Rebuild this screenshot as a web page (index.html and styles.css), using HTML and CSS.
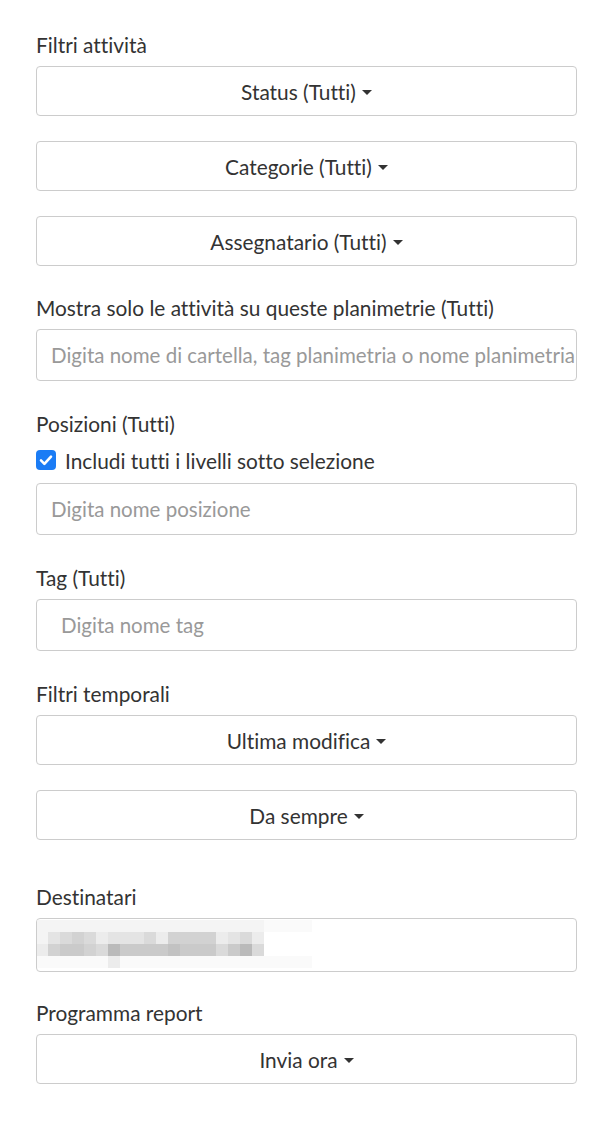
FILE: index.html
```html
<!DOCTYPE html>
<html lang="it">
<head>
<meta charset="utf-8">
<title>Filtri</title>
<link rel="stylesheet" href="styles.css">
</head>
<body>
<div class="page">
  <section class="group">
    <div class="label">Filtri attività</div>
    <div class="stack">
      <button class="dropdown">Status (Tutti)<span class="caret"></span></button>
      <button class="dropdown">Categorie (Tutti)<span class="caret"></span></button>
      <button class="dropdown">Assegnatario (Tutti)<span class="caret"></span></button>
    </div>
  </section>

  <section class="group group-input">
    <div class="label">Mostra solo le attività su queste planimetrie (Tutti)</div>
    <input class="field field-clip" type="text" placeholder="Digita nome di cartella, tag planimetria o nome planimetria">
  </section>

  <section class="group group-input">
    <div class="label">Posizioni (Tutti)</div>
    <label class="check-row">
      <span class="checkbox"><svg viewBox="0 0 20 20" width="20" height="20"><path d="M5 10.4 L8.4 13.8 L15 6.6" fill="none" stroke="#fff" stroke-width="2.6" stroke-linecap="round" stroke-linejoin="round"/></svg></span>
      <span>Includi tutti i livelli sotto selezione</span>
    </label>
    <input class="field" type="text" placeholder="Digita nome posizione">
  </section>

  <section class="group group-input">
    <div class="label">Tag (Tutti)</div>
    <input class="field field-wide" type="text" placeholder="Digita nome tag">
  </section>

  <section class="group">
    <div class="label">Filtri temporali</div>
    <div class="stack">
      <button class="dropdown">Ultima modifica<span class="caret"></span></button>
      <button class="dropdown">Da sempre<span class="caret"></span></button>
    </div>
  </section>

  <section class="group group-recipients">
    <div class="label">Destinatari</div>
    <div class="recipients">
      <div class="mosaic">
        <span class="s2"></span><span class="s2"></span><span class="s2"></span><span class="s2"></span><span class="s2"></span><span class="s2"></span><span class="s2"></span><span class="s2"></span><span class="s2"></span><span class="s2"></span><span class="s2"></span><span class="s2"></span><span class="s2"></span><span class="s2"></span><span class="s2"></span><span class="s2"></span><span class="s2"></span><span class="s2"></span><span class="s2"></span><span class="s1"></span><span class="s1"></span><span class="s1"></span><span class="s1"></span>
        <span class="s2"></span><span class="s4"></span><span class="s5"></span><span class="s6"></span><span class="s5"></span><span class="s3"></span><span class="s4"></span><span class="s4"></span><span class="s4"></span><span class="s5"></span><span class="s3"></span><span class="s6"></span><span class="s6"></span><span class="s6"></span><span class="s6"></span><span class="s3"></span><span class="s4"></span><span class="s5"></span><span class="s3"></span><span class="s0"></span><span class="s0"></span><span class="s0"></span><span class="s0"></span>
        <span class="s3"></span><span class="s6"></span><span class="s7"></span><span class="s7"></span><span class="s6"></span><span class="s5"></span><span class="s9"></span><span class="s7"></span><span class="s7"></span><span class="s7"></span><span class="s7"></span><span class="s8"></span><span class="s7"></span><span class="s7"></span><span class="s7"></span><span class="s5"></span><span class="s7"></span><span class="s9"></span><span class="s5"></span><span class="s0"></span><span class="s0"></span><span class="s0"></span><span class="s0"></span>
        <span class="s1"></span><span class="s1"></span><span class="s1"></span><span class="s1"></span><span class="s1"></span><span class="s1"></span><span class="s3"></span><span class="s1"></span><span class="s1"></span><span class="s1"></span><span class="s1"></span><span class="s1"></span><span class="s1"></span><span class="s1"></span><span class="s1"></span><span class="s1"></span><span class="s1"></span><span class="s1"></span><span class="s1"></span><span class="s1"></span><span class="s1"></span><span class="s1"></span><span class="s1"></span>
      </div>
    </div>
  </section>

  <section class="group">
    <div class="label">Programma report</div>
    <button class="dropdown">Invia ora<span class="caret"></span></button>
  </section>
</div>
</body>
</html>
```

FILE: styles.css
```css
* { box-sizing: border-box; }
html, body { margin: 0; padding: 0; background: #fff; }
body {
  font-family: Lato, "Noto Sans", "Liberation Sans", sans-serif;
  font-size: 20.85px;
  color: #333;
  font-variant-ligatures: none;
}
.page {
  padding: 33px 35px 40px 36px;
  display: flex;
  flex-direction: column;
}
.group { margin-bottom: 30px; display: flex; flex-direction: column; }
.group-input { margin-bottom: 31px; }
.group-recipients { margin-top: 15px; margin-bottom: 29px; }
.label {
  line-height: 24px;
  margin-bottom: 9px;
}
.stack { display: flex; flex-direction: column; gap: 25px; }
.dropdown {
  height: 50px;
  width: 100%;
  background: #fff;
  border: 1px solid #ccc;
  border-radius: 4px;
  font-family: inherit;
  font-size: 20.85px;
  font-variant-ligatures: none;
  color: #333;
  display: flex;
  align-items: center;
  justify-content: center;
  padding: 0 12px;
}
.caret {
  display: inline-block;
  width: 0;
  height: 0;
  margin-left: 6px;
  margin-top: 2px;
  border-top: 5px solid #333;
  border-left: 5px solid transparent;
  border-right: 5px solid transparent;
}
.field {
  height: 52px;
  width: 100%;
  border: 1px solid #ccc;
  border-radius: 4px;
  padding: 0 14px;
  font-family: inherit;
  font-size: 20.5px;
  font-variant-ligatures: none;
  color: #333;
  background: #fff;
  outline: none;
}
.field::placeholder { color: #999; opacity: 1; }
.field-clip { padding-right: 0; }
.field-wide { padding-left: 24px; }
.check-row {
  display: flex;
  align-items: center;
  gap: 9px;
  height: 30px;
  margin-bottom: 8px;
}
.checkbox {
  width: 20px;
  height: 20px;
  border-radius: 4px;
  background: #1b7cf5;
  display: flex;
  align-items: center;
  justify-content: center;
  flex: none;
}
.checkbox svg { display: block; }
.recipients {
  height: 54px;
  border: 1px solid #ccc;
  border-radius: 4px;
  padding: 1px 0 0 0;
  overflow: hidden;
}
.mosaic {
  display: grid;
  grid-template-columns: 11px repeat(22, 12px);
  grid-template-rows: repeat(4, 12px);
}
.s0 { background: transparent; }
.s1 { background: #fafafa; }
.s2 { background: #f4f4f4; }
.s3 { background: #ececec; }
.s4 { background: #e4e4e4; }
.s5 { background: #dadada; }
.s6 { background: #d2d2d2; }
.s7 { background: #cacaca; }
.s8 { background: #c2c2c2; }
.s9 { background: #bababa; }
```
